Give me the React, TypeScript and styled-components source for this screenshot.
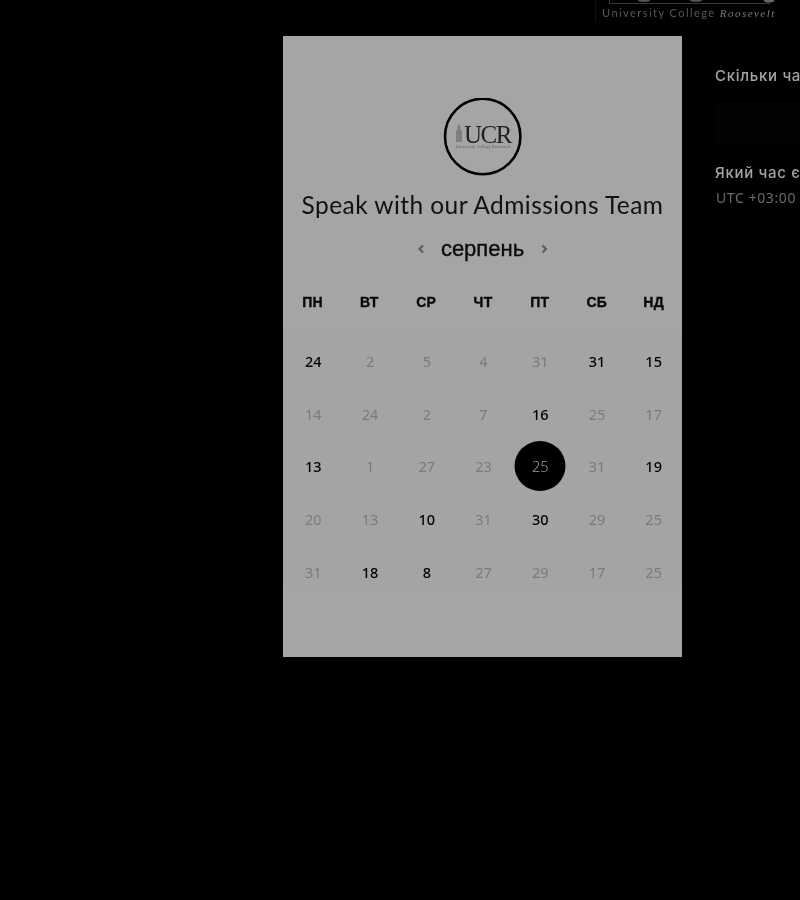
import React from "react";
import styled, { createGlobalStyle } from "styled-components";

const Global = createGlobalStyle`
  html, body { margin: 0; padding: 0; background: #000; }
  body { width: 800px; height: 900px; overflow: hidden; font-family: "Liberation Sans", Arial, sans-serif; }
`;

const Page = styled.div`
  width: 800px;
  height: 900px;
  background: #000;
  overflow: hidden;
  filter: blur(0.3px);
`;

const TopBar = styled.header`
  height: 36px;
  box-sizing: border-box;
  display: flex;
  justify-content: flex-end;
  padding-right: 25px;
`;

const Brand = styled.div`
  width: 180px;
  height: 22px;
  box-sizing: border-box;
  border-left: 1px solid #111;
  padding-left: 6px;
  display: flex;
  flex-direction: column;
  align-items: flex-start;
`;

const BrandTop = styled.svg`
  width: 174px;
  height: 6px;
  display: block;
  flex: none;
`;

const BrandName = styled.div`
  margin-top: 1px;
  font-family: Lato, "Noto Sans", sans-serif;
  font-size: 11px;
  line-height: 11px;
  letter-spacing: 1.45px;
  color: #585858;
  white-space: nowrap;
`;

const BrandAccent = styled.span`
  font-family: "Liberation Serif", serif;
  font-style: italic;
  color: #7a7a7a;
`;

const Main = styled.main`
  display: flex;
  padding-left: 283px;
  gap: 33px;
`;

const Panel = styled.section`
  width: 399px;
  height: 621px;
  flex: none;
  background: #a5a5a5;
  display: flex;
  flex-direction: column;
  align-items: center;
  padding-top: 62px;
  box-sizing: border-box;
`;

const LogoMark = styled.svg`
  width: 80px;
  height: 80px;
  display: block;
  flex: none;
`;

const Title = styled.h1`
  margin: 9px 0 0;
  font-family: Lato, "Noto Sans", sans-serif;
  font-weight: 400;
  font-size: 24.5px;
  line-height: 36px;
  letter-spacing: 0.43px;
  color: #111;
  white-space: nowrap;
`;

const MonthRow = styled.div`
  margin-top: 6px;
  height: 40px;
  display: flex;
  align-items: center;
  gap: 15px;
`;

const MonthName = styled.div`
  font-size: 22px;
  line-height: 40px;
  color: #0d0d0d;
  -webkit-text-stroke: 0.4px #0d0d0d;
`;

const Chevron = styled.svg`
  width: 10px;
  height: 12px;
  display: block;
`;

const WeekRow = styled.div`
  margin-top: 19px;
  align-self: stretch;
  padding-left: 1px;
  display: grid;
  grid-template-columns: repeat(7, 1fr);
  height: 28px;
  align-items: center;
`;

const WeekDay = styled.div`
  text-align: center;
  font-weight: 700;
  font-size: 14px;
  letter-spacing: 0.2px;
  color: #080808;
  -webkit-text-stroke: 0.35px #080808;
`;

const DaysGrid = styled.div`
  margin-top: 14px;
  align-self: stretch;
  padding: 5px 0 0 2px;
  height: 255px;
  box-sizing: border-box;
  background: #a4a4a4;
  display: grid;
  grid-template-columns: repeat(7, 1fr);
  grid-auto-rows: 52.6px;
`;

const Day = styled.div<{ $active?: boolean; $selected?: boolean }>`
  position: relative;
  display: flex;
  align-items: center;
  justify-content: center;
  font-family: "Noto Sans", "Open Sans", sans-serif;
  font-size: 14.5px;
  font-weight: ${(p) => (p.$selected ? 300 : p.$active ? 500 : 400)};
  color: ${(p) => (p.$selected ? "#9a9a9a" : p.$active ? "#000" : "#7b7b7b")};
  z-index: 0;
  &::before {
    content: "";
    display: ${(p) => (p.$selected ? "block" : "none")};
    position: absolute;
    left: 50%;
    top: 50%;
    width: 51px;
    height: 50px;
    border-radius: 50%;
    background: #000;
    transform: translate(-50%, -50%);
    z-index: -1;
  }
`;

const Side = styled.aside`
  padding-top: 30px;
  width: 85px;
  overflow: hidden;
  flex: none;
  white-space: nowrap;
`;

const SideLabel = styled.div`
  font-family: Inter, "Noto Sans", sans-serif;
  font-size: 15px;
  line-height: 20px;
  font-weight: 500;
  letter-spacing: 0.7px;
  color: #a3a3a3;
`;

const SideBlank = styled.div`
  height: 43px;
  margin: 14px 0 20px;
  background: #020202;
`;

const SideValue = styled.div`
  margin-top: 5px;
  padding-left: 1px;
  font-family: "Noto Sans", sans-serif;
  font-size: 14px;
  line-height: 20px;
  letter-spacing: 0.6px;
  color: #6a6a6a;
`;

const weekDays = ["ПН", "ВТ", "СР", "ЧТ", "ПТ", "СБ", "НД"];

const days: [number, boolean][] = [
  [24, true], [2, false], [5, false], [4, false], [31, false], [31, true], [15, true],
  [14, false], [24, false], [2, false], [7, false], [16, true], [25, false], [17, false],
  [13, true], [1, false], [27, false], [23, false], [25, false], [31, false], [19, true],
  [20, false], [13, false], [10, true], [31, false], [30, true], [29, false], [25, false],
  [31, false], [18, true], [8, true], [27, false], [29, false], [17, false], [25, false],
];

const SELECTED_INDEX = 18;

export default function App() {
  return (
    <Page>
      <Global />
      <TopBar>
        <Brand>
          <BrandTop viewBox="0 0 174 6">
            <path d="M7.5 0v3.5H168" fill="none" stroke="#3a3a3a" strokeWidth="1" />
            <ellipse cx="42" cy="0.5" rx="6" ry="1.5" fill="#555" />
            <ellipse cx="94" cy="0.5" rx="6" ry="1.5" fill="#555" />
            <ellipse cx="167" cy="0.5" rx="5" ry="2" fill="#666" />
          </BrandTop>
          <BrandName>
            University College <BrandAccent>Roosevelt</BrandAccent>
          </BrandName>
        </Brand>
      </TopBar>
      <Main>
        <Panel>
          <LogoMark viewBox="0 0 80 80" aria-label="UCR">
            <circle cx="39.700" cy="38.500" r="37.700" fill="none" stroke="#000" strokeWidth="2.600" />
            <path d="M13 44V33l1.500-1v-3l1.500-3.500 1.500 3.500v3l1.500 1v11z" fill="#7f7f7f" />
            <text x="21" y="44.500" fontFamily="Liberation Serif, serif" fontSize="25" letterSpacing="-1.500" fill="#222">UCR</text>
            <text x="13" y="49.500" fontFamily="Liberation Serif, serif" fontSize="4" letterSpacing="0.250" fill="#5a5a5a">University College Roosevelt</text>
          </LogoMark>
          <Title>Speak with our Admissions Team</Title>
          <MonthRow>
            <Chevron viewBox="0 0 10 12">
              <path d="M7 2.500 3.500 6 7 9.500" fill="none" stroke="#5f5f5f" strokeWidth="2.200" />
            </Chevron>
            <MonthName>серпень</MonthName>
            <Chevron viewBox="0 0 10 12">
              <path d="M3.500 2.500 7 6l-3.500 3.500" fill="none" stroke="#5f5f5f" strokeWidth="2.200" />
            </Chevron>
          </MonthRow>
          <WeekRow>
            {weekDays.map((d) => (
              <WeekDay key={d}>{d}</WeekDay>
            ))}
          </WeekRow>
          <DaysGrid>
            {days.map(([n, active], i) => (
              <Day key={i} $active={active} $selected={i === SELECTED_INDEX}>
                {n}
              </Day>
            ))}
          </DaysGrid>
        </Panel>
        <Side>
          <SideLabel>Скільки часу вам потрібно?</SideLabel>
          <SideBlank />
          <SideLabel>Який час є для вас зручним?</SideLabel>
          <SideValue>UTC +03:00</SideValue>
        </Side>
      </Main>
    </Page>
  );
}
